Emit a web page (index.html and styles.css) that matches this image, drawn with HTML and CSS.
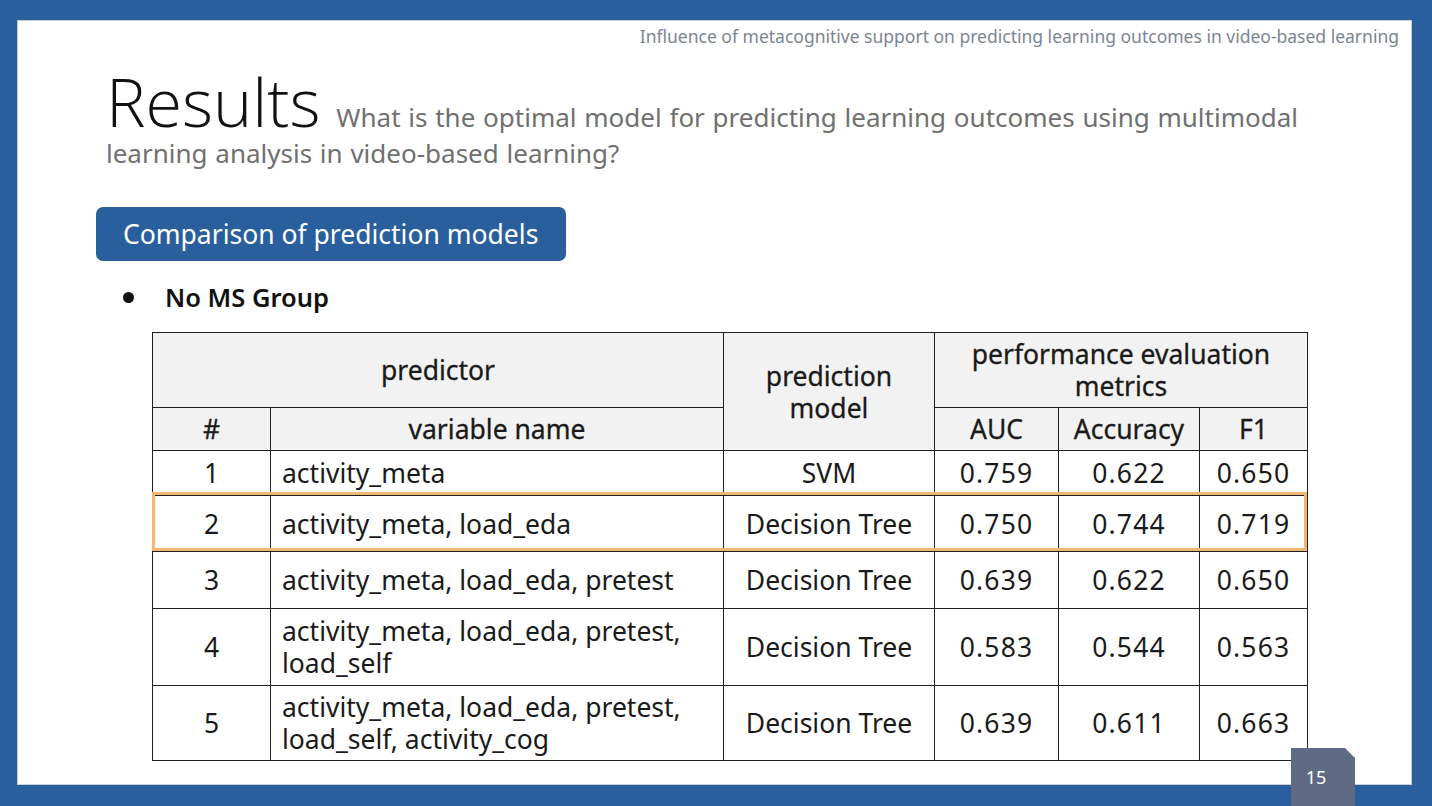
FILE: index.html
```html
<!DOCTYPE html>
<html>
<head>
<meta charset="utf-8">
<link rel="stylesheet" href="styles.css">
</head>
<body>
<div class="slide">
  <div class="running">Influence of metacognitive support on predicting learning outcomes in video-based learning</div>
  <h1 class="title"><span class="big">Results</span> <span class="question">What is the optimal model for predicting learning outcomes using multimodal learning analysis in video-based learning?</span></h1>
  <div class="tag">Comparison of prediction models</div>
  <div class="bullet"><span class="dot"></span>No MS Group</div>
  <div class="tablewrap">
    <table class="results">
      <colgroup>
        <col class="c1"><col class="c2"><col class="c3"><col class="c4"><col class="c5"><col class="c6">
      </colgroup>
      <tr class="h1">
        <th colspan="2">predictor</th>
        <th rowspan="2">prediction<br>model</th>
        <th colspan="3">performance evaluation<br>metrics</th>
      </tr>
      <tr class="h2">
        <th>#</th><th>variable name</th><th>AUC</th><th>Accuracy</th><th>F1</th>
      </tr>
      <tr class="r1"><td>1</td><td class="var">activity_meta</td><td>SVM</td><td class="num">0.759</td><td class="num">0.622</td><td class="num">0.650</td></tr>
      <tr class="r2"><td>2</td><td class="var">activity_meta, load_eda</td><td>Decision Tree</td><td class="num">0.750</td><td class="num">0.744</td><td class="num">0.719</td></tr>
      <tr class="r3"><td>3</td><td class="var">activity_meta, load_eda, pretest</td><td>Decision Tree</td><td class="num">0.639</td><td class="num">0.622</td><td class="num">0.650</td></tr>
      <tr class="r4"><td>4</td><td class="var">activity_meta, load_eda, pretest,<br>load_self</td><td>Decision Tree</td><td class="num">0.583</td><td class="num">0.544</td><td class="num">0.563</td></tr>
      <tr class="r5"><td>5</td><td class="var">activity_meta, load_eda, pretest,<br>load_self, activity_cog</td><td>Decision Tree</td><td class="num">0.639</td><td class="num">0.611</td><td class="num">0.663</td></tr>
    </table>
    <div class="highlight"></div>
  </div>
</div>
<div class="pagenum">15</div>
</body>
</html>
```

FILE: styles.css
```css
html, body {
  margin: 0;
  padding: 0;
}
body {
  width: 1432px;
  height: 806px;
  background: #2a5f9e;
  position: relative;
  overflow: hidden;
  font-family: "Noto Sans", "Open Sans", sans-serif;
}
.slide {
  position: absolute;
  left: 17px;
  top: 20px;
  width: 1393px;
  height: 763px;
  background: #ffffff;
  border: 1px solid #c9ccd2;
}
.running {
  text-align: right;
  padding-right: 12px;
  padding-top: 4px;
  font-size: 17.5px;
  line-height: 23px;
  color: #7b8595;
}
.title {
  margin: 21px 0 0 88px;
  width: 1240px;
  font-family: "Open Sans", "Noto Sans", sans-serif;
  font-weight: 300;
  font-size: 26px;
  line-height: 36px;
  color: #707070;
}
.title .big {
  font-size: 66.5px;
  line-height: 64px;
  color: #111111;
}
.title .question {
  margin-left: 9px;
  font-weight: 400;
  word-spacing: 1px;
  font-family: "Noto Sans", "Open Sans", sans-serif;
}
.tag {
  margin: 36px 0 0 78px;
  width: 470px;
  height: 54px;
  box-sizing: border-box;
  border-radius: 7px;
  background: #2a5f9e;
  color: #ffffff;
  font-size: 26.5px;
  line-height: 54px;
  padding-left: 27px;
}
.bullet {
  margin: 19px 0 0 105px;
  display: flex;
  align-items: center;
  font-size: 25.5px;
  font-weight: 600;
  line-height: 34px;
  color: #111111;
}
.dot {
  width: 11px;
  height: 11px;
  border-radius: 50%;
  background: #111111;
  margin-right: 31px;
}
.tablewrap {
  position: relative;
  margin: 18px 0 0 134px;
  width: 1155px;
}
.results {
  border-collapse: collapse;
  width: 1155px;
  table-layout: fixed;
  font-size: 26.5px;
  color: #1a1a1a;
}
.c1 { width: 118px; }
.c2 { width: 453px; }
.c3 { width: 211px; }
.c4 { width: 124px; }
.c5 { width: 141px; }
.c6 { width: 108px; }
.results th, .results td {
  border: 1.5px solid #1f1f1f;
  text-align: center;
  padding: 0;
  line-height: 32px;
}
.results th {
  background: #f2f2f2;
  font-weight: 400;
  font-size: 26.5px;
  -webkit-text-stroke: 0.3px #1a1a1a;
}
.results td.var {
  text-align: left;
  padding-left: 11px;
}
.results td.num {
  letter-spacing: 1.2px;
}
.h1 { height: 75px; }
.h2 { height: 43px; }
.r1 { height: 45px; }
.r2 { height: 56px; }
.r3 { height: 57px; }
.r4 { height: 77px; }
.r5 { height: 75px; }
.highlight {
  position: absolute;
  left: 0;
  top: 160px;
  width: 1155px;
  height: 59px;
  box-sizing: border-box;
  border: 3px solid #f2b774;
  pointer-events: none;
}
.pagenum {
  position: absolute;
  left: 1291px;
  top: 748px;
  width: 64px;
  height: 58px;
  box-sizing: border-box;
  padding-right: 14px;
  background: #5f6a84;
  color: #ffffff;
  font-size: 18px;
  text-align: center;
  line-height: 58px;
  clip-path: polygon(0 0, 54px 0, 64px 10px, 64px 100%, 0 100%);
}
```
